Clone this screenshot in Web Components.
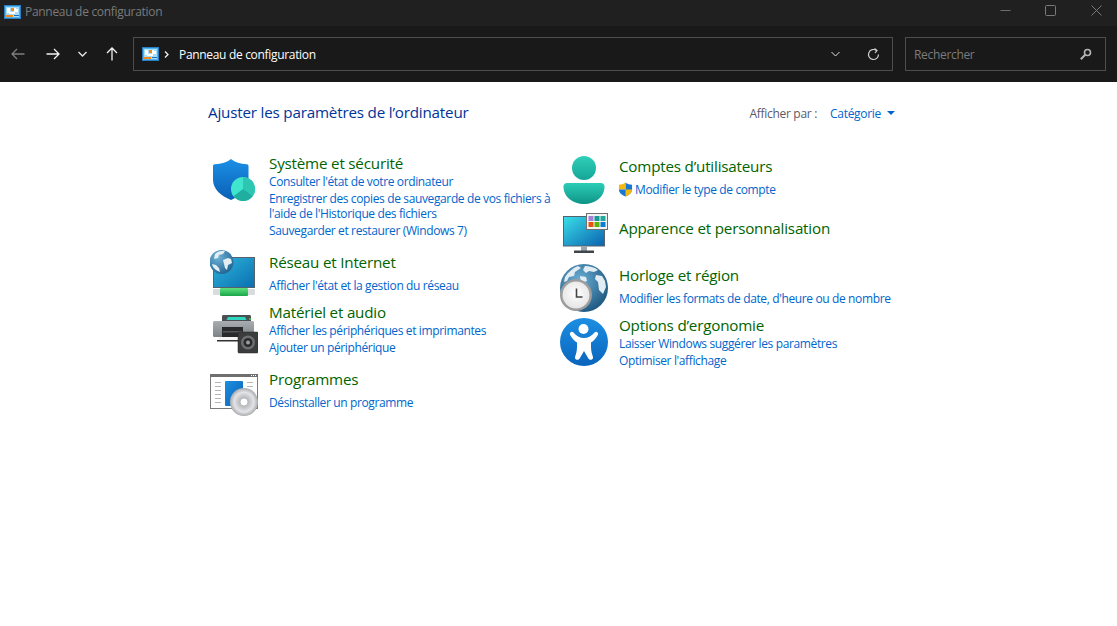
<!DOCTYPE html>
<html lang="fr">
<head>
<meta charset="utf-8">
<title>Panneau de configuration</title>
<style>
  html, body { margin: 0; height: 100%; background: #fff; overflow: hidden; }
  body { font-family: "Open Sans", "Liberation Sans", sans-serif; }
  cp-category svg { width: 48px; height: 48px; display: block; }
  cp-category svg.uac { width: 15px; height: 15px; }
</style>
</head>
<body>

<cp-window>
  <cp-titlebar slot="top">Panneau de configuration</cp-titlebar>
  <cp-navbar slot="top" location="Panneau de configuration" placeholder="Rechercher"></cp-navbar>

  <cp-header label="Afficher par :" value="Catégorie">Ajuster les paramètres de l’ordinateur</cp-header>

  <cp-columns>
    <div slot="left">
      <cp-category title="Système et sécurité" style="--h:99px;--icon-top:2px">
        <svg slot="icon" viewBox="0 0 48 48">
          <defs>
            <linearGradient id="sh" x1="0" y1="0" x2="0" y2="1"><stop offset="0" stop-color="#1b8fe6"/><stop offset="1" stop-color="#0a5fb4"/></linearGradient>
          </defs>
          <path d="M21 4c4 3.400 9.500 5 15.500 5.200 1 0 2 .6 2 1.500V25c0 9-7.500 16-17.500 20C11 41 3 34 3 25V10.700c0-.9 1-1.500 2-1.500C11.500 9 17 7.400 21 4z" fill="url(#sh)"/>
          <circle cx="33" cy="34" r="12" fill="#3fe6cd"/>
          <path d="M33 34V22a12 12 0 0 1 9.800 19z" fill="#2cc6b2"/>
          <path d="M33 34l9.800 7a12 12 0 0 1-19.300.3z" fill="#1fae9f"/>
        </svg>
        <cp-link>Consulter l'état de votre ordinateur</cp-link>
        <cp-link>Enregistrer des copies de sauvegarde de vos fichiers à l'aide de l'Historique des fichiers</cp-link>
        <cp-link>Sauvegarder et restaurer (Windows 7)</cp-link>
      </cp-category>

      <cp-category title="Réseau et Internet" spaced style="--h:50px;--icon-top:-3px">
        <svg slot="icon" viewBox="0 0 48 48">
          <defs>
            <linearGradient id="ns" x1="0" y1="0" x2="1" y2="1"><stop offset="0" stop-color="#2fb6dc"/><stop offset="1" stop-color="#0a6fb0"/></linearGradient>
            <linearGradient id="ng" x1="0" y1="0" x2="0" y2="1"><stop offset="0" stop-color="#5fe07e"/><stop offset="1" stop-color="#1aa64a"/></linearGradient>
            <radialGradient id="nb" cx=".35" cy=".3" r=".8"><stop offset="0" stop-color="#6fb3d8"/><stop offset="1" stop-color="#1c5f8f"/></radialGradient>
          </defs>
          <rect x="3.500" y="8.500" width="41" height="30" fill="url(#ns)" stroke="#55616b"/>
          <rect x="3" y="40" width="42" height="6" rx="1" fill="#d8dcdc"/>
          <rect x="10" y="39" width="28" height="8" rx="1" fill="url(#ng)"/>
          <circle cx="11.500" cy="13" r="12" fill="url(#nb)"/>
          <path d="M5 5c3-3 7-3.500 10-3l-2 3-4 1-1 3-4 1zM13 11l5-2 3 1 1 4-4 2-1 5-2-2-1-4zM2 15l4 1 3 3 1 4-4-2-3-3z" fill="#e3eef3"/>
        </svg>
        <cp-link>Afficher l'état et la gestion du réseau</cp-link>
      </cp-category>

      <cp-category title="Matériel et audio" style="--h:67px;--icon-top:8px">
        <svg slot="icon" viewBox="0 0 48 48">
          <defs>
            <linearGradient id="pb" x1="0" y1="0" x2="0" y2="1"><stop offset="0" stop-color="#a8aeb2"/><stop offset="1" stop-color="#7c8286"/></linearGradient>
          </defs>
          <path d="M12 6.500c0-1 .7-1.500 1.500-1.500h26c.8 0 1.500.6 1.500 1.500V11H12z" fill="#4b4f52"/>
          <path d="M18 7h17l1.500 3h-20z" fill="#2fd5bf"/>
          <rect x="3" y="11" width="41" height="16" rx="1.500" fill="url(#pb)"/>
          <circle cx="40" cy="9" r="1" fill="#35d04f"/>
          <rect x="12" y="17" width="21" height="10" fill="#27292b"/>
          <rect x="13" y="21" width="19" height="1.500" fill="#555"/>
          <rect x="9" y="27" width="20" height="3" fill="#f4f4f4"/>
          <rect x="7" y="30" width="22" height="1.500" fill="#333"/>
          <rect x="28" y="22" width="20" height="21" rx="1" fill="#3a3c3e" stroke="#202122" stroke-width=".5"/>
          <circle cx="38" cy="32.500" r="7" fill="#6d6f71"/>
          <circle cx="38" cy="32.500" r="4.500" fill="#2a2b2c"/>
          <circle cx="38" cy="32.500" r="2" fill="#9a9c9e"/>
        </svg>
        <cp-link>Afficher les périphériques et imprimantes</cp-link>
        <cp-link>Ajouter un périphérique</cp-link>
      </cp-category>

      <cp-category title="Programmes" spaced style="--h:60px;--icon-top:1px">
        <svg slot="icon" viewBox="0 0 48 48">
          <defs>
            <linearGradient id="pg" x1="0" y1="0" x2="1" y2="1"><stop offset="0" stop-color="#1c8fe0"/><stop offset="1" stop-color="#0a62b8"/></linearGradient>
            <radialGradient id="cd"><stop offset="0" stop-color="#f2f2f2"/><stop offset=".35" stop-color="#bdbfc1"/><stop offset=".7" stop-color="#e4e4e8"/><stop offset="1" stop-color="#a9abad"/></radialGradient>
          </defs>
          <rect x=".5" y="4.500" width="47" height="34" fill="#fff" stroke="#7a7a7a"/>
          <rect x="0" y="4" width="48" height="3" fill="#6f6f6f"/>
          <g fill="#fff"><rect x="41" y="5" width="1" height="1"/><rect x="43" y="5" width="1" height="1"/><rect x="45" y="5" width="1" height="1"/></g>
          <g fill="#b5b5b5">
            <rect x="5" y="12" width="6" height="1"/><rect x="5" y="16" width="6" height="1"/><rect x="5" y="20" width="6" height="1"/><rect x="5" y="24" width="6" height="1"/><rect x="5" y="28" width="6" height="1"/><rect x="5" y="32" width="6" height="1"/>
            <rect x="37" y="12" width="6" height="1"/><rect x="37" y="16" width="6" height="1"/>
          </g>
          <rect x="15" y="11" width="18" height="25" rx="1" fill="url(#pg)"/>
          <circle cx="34" cy="32" r="14" fill="url(#cd)"/>
          <circle cx="34" cy="32" r="4" fill="#fff" stroke="#a0a2a4" stroke-width=".7"/>
        </svg>
        <cp-link>Désinstaller un programme</cp-link>
      </cp-category>
    </div>

    <div slot="right">
      <cp-category title="Comptes d’utilisateurs" spaced style="--h:62px;--icon-top:0px">
        <svg slot="icon" viewBox="0 0 48 48">
          <defs>
            <linearGradient id="ua" x1="0" y1="0" x2="0" y2="1"><stop offset="0" stop-color="#2fd0ba"/><stop offset="1" stop-color="#15a596"/></linearGradient>
            <linearGradient id="ub" x1="0" y1="0" x2="0" y2="1"><stop offset="0" stop-color="#2bcdb6"/><stop offset="1" stop-color="#0f9488"/></linearGradient>
          </defs>
          <circle cx="24" cy="12" r="12" fill="url(#ua)"/>
          <path d="M7 27h34c2 0 3.500 1.500 3.500 3.500C44.500 41 35 48 24 48S3.500 41 3.500 30.500C3.500 28.500 5 27 7 27z" fill="url(#ub)"/>
        </svg>
        <cp-link>
          <svg class="uac" slot="lead" viewBox="0 0 16 16">
            <path d="M8 .5C10 2 12.500 2.800 15 3v5c0 3.500-3 6-7 7.500z" fill="#1877d4"/>
            <path d="M8 .5C6 2 3.500 2.800 1 3v5h7z" fill="#f2b90f"/>
            <path d="M8 8h7c0 3.500-3 6-7 7.500z" fill="#f2b90f"/>
            <path d="M1 8h7v7.500C4 14 1 11.500 1 8z" fill="#1877d4"/>
          </svg>
          Modifier le type de compte
        </cp-link>
      </cp-category>

      <cp-category title="Apparence et personnalisation" style="--h:47px;--icon-top:-8px">
        <svg slot="icon" viewBox="0 0 48 48">
          <defs>
            <linearGradient id="ms" x1="0" y1="0" x2="1" y2="1"><stop offset="0" stop-color="#3adfe8"/><stop offset="1" stop-color="#0a62b0"/></linearGradient>
          </defs>
          <rect x="3.500" y="6.500" width="41" height="29.500" fill="url(#ms)" stroke="#55616b"/>
          <rect x="21" y="36" width="6" height="5" fill="#9aa4aa"/>
          <rect x="14" y="40.500" width="20" height="2.500" fill="#3f4549"/>
          <rect x="26.500" y="3.500" width="21" height="16" fill="#f4f4f4" stroke="#6f6f6f"/>
          <rect x="28.500" y="6" width="5" height="5" fill="#a67fd8"/>
          <rect x="34.500" y="6" width="5" height="5" fill="#159a94"/>
          <rect x="40.500" y="6" width="5" height="5" fill="#1fa89c"/>
          <rect x="28.500" y="12" width="5" height="5" fill="#e8540f"/>
          <rect x="34.500" y="12" width="5" height="5" fill="#5cb30a"/>
          <rect x="40.500" y="12" width="5" height="5" fill="#0a7fd6"/>
        </svg>
      </cp-category>

      <cp-category title="Horloge et région" spaced style="--h:50px;--icon-top:-1px">
        <svg slot="icon" viewBox="0 0 48 48">
          <defs>
            <radialGradient id="gl" cx=".4" cy=".35" r=".75"><stop offset="0" stop-color="#6cb0d6"/><stop offset="1" stop-color="#174f78"/></radialGradient>
            <radialGradient id="fc" cx=".5" cy=".45" r=".6"><stop offset="0" stop-color="#fff"/><stop offset="1" stop-color="#e3e3e3"/></radialGradient>
          </defs>
          <circle cx="24" cy="24" r="24" fill="url(#gl)"/>
          <path d="M5 13c3-5 8-9 13-11l3 2-6 4-1 4-5 1-2 4-3 1zM25 2c5 0 9 1 13 4l-4 2-5-1-3 2-3-3zM36 11l6 1 3 5 1 6-3 7-4-4-1-8-3-3zM20 12l6 1 1 4-6 2z" fill="#e2edf3"/>
          <circle cx="16" cy="31" r="16" fill="#9d9d9d"/>
          <circle cx="16" cy="31" r="13.500" fill="url(#fc)"/>
          <path d="M16.500 24.500V33h6" fill="none" stroke="#444" stroke-width="1.600"/>
        </svg>
        <cp-link>Modifier les formats de date, d'heure ou de nombre</cp-link>
      </cp-category>

      <cp-category title="Options d’ergonomie" style="--h:60px;--icon-top:3px">
        <svg slot="icon" viewBox="0 0 48 48">
          <defs>
            <linearGradient id="ac" x1="0" y1="0" x2="0" y2="1"><stop offset="0" stop-color="#1c8fe3"/><stop offset="1" stop-color="#0a64bc"/></linearGradient>
          </defs>
          <circle cx="24" cy="24" r="24" fill="url(#ac)"/>
          <circle cx="23.500" cy="11" r="5" fill="#fff"/>
          <path d="M13.500 14.500C16 18 20 20 24 20s8-2 10.500-5.500c1.500-2 4.500 0 3.500 2.300C36 20.500 33.500 23 31 24.500V29c0 4 1 7 2 10 .7 2.500-3 4-4.500 1.800L24 33l-4.500 7.800C18 43 14.300 41.500 15 39c1-3 2-6 2-10v-4.500C14.500 23 12 20.500 10 16.800c-1-2.300 2-4.300 3.500-2.300z" fill="#fff"/>
        </svg>
        <cp-link>Laisser Windows suggérer les paramètres</cp-link>
        <cp-link>Optimiser l'affichage</cp-link>
      </cp-category>
    </div>
  </cp-columns>
</cp-window>

<script>
const PANEL_ICON = `
  <svg viewBox="0 0 17 14" width="17" height="14">
    <rect x=".5" y=".5" width="16" height="13" fill="#4fb4ec" stroke="#2a7fc4"/>
    <rect x="2" y="2" width="13" height="10" fill="#a6def9"/>
    <path d="M3 3h3v4h4V3h2v1h2v3h-3v2H5V8H3z" fill="#fff"/>
    <rect x="7" y="3" width="3" height="3" fill="#f08a1d"/>
    <rect x="2" y="10" width="7" height="2" fill="#f08a1d"/>
    <rect x="10" y="10" width="5" height="1" fill="#1e6fb8"/>
  </svg>`;

class CpWindow extends HTMLElement {
  constructor() {
    super();
    this.attachShadow({ mode: 'open' });
    this.shadowRoot.innerHTML = `
      <style>
        :host { display: flex; flex-direction: column; height: 626px; background: #fff; }
        .content { padding: 0 222px 0 208px; }
      </style>
      <slot name="top"></slot>
      <div class="content"><slot></slot></div>
    `;
  }
}

class CpTitlebar extends HTMLElement {
  constructor() {
    super();
    this.attachShadow({ mode: 'open' });
    this.shadowRoot.innerHTML = `
      <style>
        :host { display: flex; align-items: flex-start; height: 26px; background: #202020; color: #7b7b7b;
          font: 12px/24px "Open Sans", "Liberation Sans", sans-serif; letter-spacing: -.3px; padding-left: 4px; }
        .icon { display: flex; margin-right: 4px; margin-top: 5px; }
        .label { flex: 1; }
        .ctl { width: 45px; height: 20px; display: flex; align-items: center; justify-content: center; }
        .max { margin-right: 2px; }
        .close { width: 42px; }
        svg { display: block; }
      </style>
      <span class="icon">${PANEL_ICON}</span>
      <span class="label"><slot></slot></span>
      <span class="ctl"><svg width="11" height="11" viewBox="0 0 11 11"><path d="M.5 5.500h10" stroke="#6e6e6e"/></svg></span>
      <span class="ctl max"><svg width="11" height="11" viewBox="0 0 11 11"><rect x=".5" y=".5" width="10" height="10" rx="1" fill="none" stroke="#7a7a7a"/></svg></span>
      <span class="ctl close"><svg width="11" height="11" viewBox="0 0 11 11"><path d="M.5.500l10 10M10.500.500l-10 10" stroke="#7a7a7a"/></svg></span>
    `;
  }
}

class CpNavbar extends HTMLElement {
  constructor() {
    super();
    this.attachShadow({ mode: 'open' });
  }

  connectedCallback() {
    this.shadowRoot.innerHTML = `
      <style>
        :host { display: flex; align-items: center; height: 56px; background: #191919; color: #fff;
          font: 12px "Open Sans", "Liberation Sans", sans-serif; letter-spacing: -.32px; padding-right: 11px; box-sizing: border-box; }
        .btn { display: flex; justify-content: center; align-items: center; flex: none; }
        .box { display: flex; align-items: center; height: 34px; box-sizing: border-box; border: 1px solid #4d4d4d; background: #191919; }
        .addr { flex: 1; margin-left: 5px; padding-left: 8px; }
        .addr .path { flex: 1; margin-left: 10px; }
        .search { width: 201px; margin-left: 12px; padding: 0 13px 0 8px; color: #7b7b7b; justify-content: space-between; }
        svg { display: block; }
      </style>
      <span class="btn" style="width:35px"><svg width="14" height="12" viewBox="0 0 14 12" fill="none" stroke="#7d7d7d" stroke-width="1.300"><path d="M13.500 6H1M6 1 1 6l5 5"/></svg></span>
      <span class="btn" style="width:35px"><svg width="14" height="12" viewBox="0 0 14 12" fill="none" stroke="#f2f2f2" stroke-width="1.300"><path d="M.5 6H13M8 1l5 5-5 5"/></svg></span>
      <span class="btn" style="width:25px"><svg width="9" height="6" viewBox="0 0 9 6" fill="none" stroke="#e8e8e8" stroke-width="1.300"><path d="M.5 1 4.500 5l4-4"/></svg></span>
      <span class="btn" style="width:33px"><svg width="12" height="14" viewBox="0 0 12 14" fill="none" stroke="#f2f2f2" stroke-width="1.300"><path d="M6 13.500V1M1 6l5-5 5 5"/></svg></span>
      <div class="box addr">
        ${PANEL_ICON}
        <svg style="margin-left:5px" width="5" height="7" viewBox="0 0 5 7" fill="none" stroke="#f0f0f0" stroke-width="1.300"><path d="M1 .5l3 3-3 3"/></svg>
        <span class="path">${this.getAttribute('location')}</span>
        <svg width="9" height="6" viewBox="0 0 9 6" fill="none" stroke="#e0e0e0"><path d="M.5 1 4.500 5l4-4"/></svg>
        <svg style="margin:0 12px 0 27px" width="13" height="13" viewBox="0 0 13 13" fill="none" stroke="#d0d0d0" stroke-width="1.200"><path d="M11.500 6.500A5 5 0 1 1 9.500 2.500"/><path d="M7.500 .5l2.500 2-2 2.500"/></svg>
      </div>
      <div class="box search">
        <span>${this.getAttribute('placeholder')}</span>
        <svg width="12" height="12" viewBox="0 0 12 12" fill="none" stroke="#b5b5b5"><circle cx="7.500" cy="4.500" r="3" stroke-width="1.600"/><path d="M5.200 6.800.8 11.200" stroke-width="2"/></svg>
      </div>
    `;
  }
}

class CpHeader extends HTMLElement {
  constructor() {
    super();
    this.attachShadow({ mode: 'open' });
  }

  connectedCallback() {
    this.shadowRoot.innerHTML = `
      <style>
        :host { display: flex; align-items: center; justify-content: space-between; height: 22px; margin-top: 20px;
          font-family: "Open Sans", "Liberation Sans", sans-serif; }
        h1 { margin: 0 0 2px; font-size: 15.200px; font-weight: 400; color: #003399; letter-spacing: -.19px; }
        .view { display: flex; align-items: center; font-size: 12px; letter-spacing: -.3px; color: #5a5a68; }
        .value { color: #0066cc; margin-left: 13px; }
        .caret { width: 0; height: 0; border: 4px solid transparent; border-top: 4px solid #0066cc; border-bottom: 0; margin-left: 6px; }
      </style>
      <h1><slot></slot></h1>
      <div class="view">
        <span>${this.getAttribute('label')}</span>
        <span class="value">${this.getAttribute('value')}</span>
        <span class="caret"></span>
      </div>
    `;
  }
}

class CpColumns extends HTMLElement {
  constructor() {
    super();
    this.attachShadow({ mode: 'open' });
    this.shadowRoot.innerHTML = `
      <style>
        :host { display: grid; grid-template-columns: 350px 1fr; margin-top: 29px; }
        .right { margin-top: 3px; }
      </style>
      <div><slot name="left"></slot></div>
      <div class="right"><slot name="right"></slot></div>
    `;
  }
}

class CpCategory extends HTMLElement {
  constructor() {
    super();
    this.attachShadow({ mode: 'open' });
  }

  connectedCallback() {
    this.shadowRoot.innerHTML = `
      <style>
        :host { display: grid; grid-template-columns: 48px 1fr; column-gap: 11px; padding-left: 2px; min-height: var(--h, 50px);
          font-family: "Open Sans", "Liberation Sans", sans-serif; }
        .icon { margin-top: var(--icon-top, 0); height: 0; }
        .title { font-size: 15.200px; line-height: 20px; color: #006400; letter-spacing: -.2px; }
        .links { display: flex; flex-direction: column; gap: 2px; margin-top: 1px; }
        :host([spaced]) .links { margin-top: 5.500px; }
      </style>
      <div class="icon"><slot name="icon"></slot></div>
      <div>
        <div class="title">${this.getAttribute('title')}</div>
        <div class="links"><slot></slot></div>
      </div>
    `;
    this.removeAttribute('title');
  }
}

class CpLink extends HTMLElement {
  constructor() {
    super();
    this.attachShadow({ mode: 'open' });
    this.shadowRoot.innerHTML = `
      <style>
        :host { display: flex; align-items: flex-start; font-size: 12px; line-height: 15px; color: #0066cc; letter-spacing: -.37px; }
        ::slotted(svg) { margin: 0 2px 0 -1px; flex: none; }
      </style>
      <slot name="lead"></slot><span><slot></slot></span>
    `;
  }
}

customElements.define('cp-window', CpWindow);
customElements.define('cp-titlebar', CpTitlebar);
customElements.define('cp-navbar', CpNavbar);
customElements.define('cp-header', CpHeader);
customElements.define('cp-columns', CpColumns);
customElements.define('cp-category', CpCategory);
customElements.define('cp-link', CpLink);
</script>
</body>
</html>
